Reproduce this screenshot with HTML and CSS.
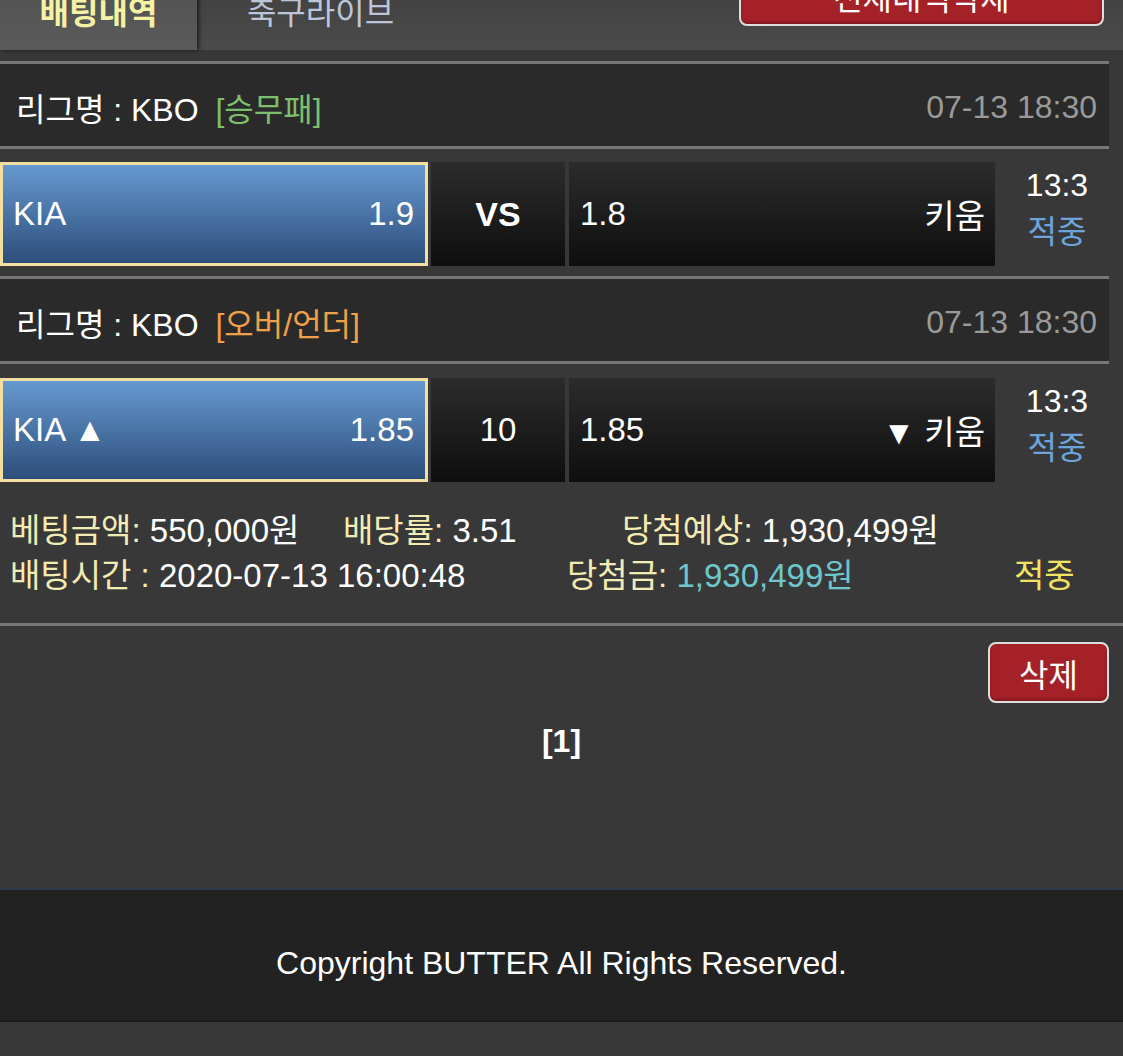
FILE: index.html
```html
<!DOCTYPE html>
<html lang="ko">
<head>
    <meta charset="UTF-8">
    <meta name="viewport" content="width=device-width, initial-scale=1.0">
    <title>배팅내역</title>
    <link rel="stylesheet" href="styles.css">
</head>
<body>
    <div class="top-bar">
        <div class="tabs">
            <a href="#" class="tab active">배팅내역</a>
            <a href="#" class="tab">축구라이브</a>
        </div>
        <button class="btn-red btn-all">전체내역삭제</button>
    </div>

    <div class="bet-list">
        <div class="league-row">
            <div class="league-name">리그명 : KBO <span class="type win">[승무패]</span></div>
            <div class="league-date">07-13 18:30</div>
        </div>
        <div class="match-row">
            <div class="team home selected">
                <span>KIA</span>
                <span>1.9</span>
            </div>
            <div class="team middle vs">VS</div>
            <div class="team away">
                <span>1.8</span>
                <span>키움</span>
            </div>
            <div class="result">
                <div class="score">13:3</div>
                <div class="hit">적중</div>
            </div>
        </div>

        <div class="league-row">
            <div class="league-name">리그명 : KBO <span class="type over">[오버/언더]</span></div>
            <div class="league-date">07-13 18:30</div>
        </div>
        <div class="match-row">
            <div class="team home selected">
                <span>KIA ▲</span>
                <span>1.85</span>
            </div>
            <div class="team middle">10</div>
            <div class="team away">
                <span>1.85</span>
                <span>▼ 키움</span>
            </div>
            <div class="result">
                <div class="score">13:3</div>
                <div class="hit">적중</div>
            </div>
        </div>

        <div class="bet-info">
            <div class="info-line">
                <span class="col col-a"><em>베팅금액:</em> 550,000원</span>
                <span class="col col-b"><em>배당률:</em> 3.51</span>
                <span class="col"><em>당첨예상:</em> 1,930,499원</span>
            </div>
            <div class="info-line">
                <span class="col col-c"><em>배팅시간 :</em> 2020-07-13 16:00:48</span>
                <span class="col col-d"><em>당첨금:</em> <b class="win-money">1,930,499원</b></span>
                <span class="col status">적중</span>
            </div>
        </div>
    </div>

    <div class="actions">
        <button class="btn-red btn-delete">삭제</button>
    </div>
    <div class="paging">[1]</div>

    <div class="footer">Copyright BUTTER All Rights Reserved.</div>
</body>
</html>
```

FILE: styles.css
```css
body {
    font-family: "Liberation Sans", "Noto Sans CJK KR", sans-serif;
    font-size: 33px;
    background-color: #383838;
    color: #fff;
    margin: 0;
    padding: 0;
}
.top-bar {
    margin-top: -40px;
    height: 90px;
    display: flex;
    justify-content: space-between;
    background: linear-gradient(#3c3c3c, #4b4b4b);
}
.tabs {
    display: flex;
}
.tab {
    width: 197px;
    padding-top: 36px;
    line-height: 34px;
    text-align: center;
    font-size: 32px;
    color: #bcc6d8;
    text-decoration: none;
}
.tab.active {
    background: linear-gradient(#4f4f4f, #5a5a5a);
    box-shadow: 2px 0 4px rgba(0, 0, 0, 0.6);
    color: #f4f2a4;
    font-weight: bold;
}
.tab + .tab {
    margin-left: 25px;
}
.btn-red {
    font-family: inherit;
    font-size: 32px;
    color: #fff;
    background: #a52128;
    border: 2px solid #dedede;
    border-radius: 8px;
    box-shadow: inset 0 -2px 3px rgba(0, 0, 0, 0.25);
    height: 61px;
    padding: 0;
}
.btn-all {
    width: 365px;
    margin: 5px 19px 0 0;
}
.bet-list {
    padding-top: 11px;
}
.league-row {
    width: 1109px;
    box-sizing: border-box;
    height: 88px;
    display: flex;
    justify-content: space-between;
    align-items: center;
    padding: 4px 12px 0 16px;
    background: #2a2a2a;
    border-top: 3px solid #777;
    border-bottom: 3px solid #777;
    font-size: 32px;
}
.type {
    margin-left: 8px;
}
.type.win {
    color: #7dbf6c;
}
.type.over {
    color: #f0a048;
}
.league-date {
    color: #9a9a9a;
}
.match-row {
    display: flex;
    width: 1109px;
    height: 104px;
    margin: 13px 0 10px;
}
.match-row + .league-row + .match-row {
    margin-top: 14px;
}
.team {
    display: flex;
    justify-content: space-between;
    align-items: center;
    box-sizing: border-box;
    background: linear-gradient(#2c2c2c, #0e0e0e);
}
.home {
    width: 428px;
    padding: 0 11px 0 10px;
    border: 3px solid #f3e0a0;
    background: linear-gradient(#6699d0, #2d4e7b);
}
.middle {
    width: 134px;
    margin-left: 3px;
    justify-content: center;
}
.vs {
    font-weight: bold;
    font-size: 34px;
}
.away {
    width: 426px;
    margin-left: 4px;
    padding: 0 10px 0 11px;
}
.result {
    flex: 1;
    text-align: center;
    padding-left: 10px;
    line-height: 47px;
    font-size: 32px;
}
.hit {
    color: #6ea4dc;
}
.bet-info {
    padding: 26px 0 25px 10px;
    border-bottom: 3px solid #777;
    margin-top: -10px;
}
.info-line {
    display: flex;
    line-height: 45px;
}
.info-line em {
    font-style: normal;
    color: #f3ebb4;
}
.col-a {
    width: 333px;
}
.col-b {
    width: 279px;
}
.col-c {
    width: 557px;
}
.col-d {
    width: 447px;
}
.win-money {
    font-weight: normal;
    color: #6ec7cb;
}
.status {
    color: #f2e264;
}
.actions {
    display: flex;
    justify-content: flex-end;
    padding: 16px 14px 0 0;
}
.btn-delete {
    width: 121px;
}
.paging {
    text-align: center;
    font-weight: bold;
    font-size: 32px;
    line-height: 40px;
    margin-top: 18px;
    margin-bottom: 127px;
}
.footer {
    background: #222;
    border-top: 2px solid #2d3a4a;
    border-bottom: 2px solid #1c1c1e;
    height: 130px;
    line-height: 146px;
    text-align: center;
    font-size: 32px;
}
```
